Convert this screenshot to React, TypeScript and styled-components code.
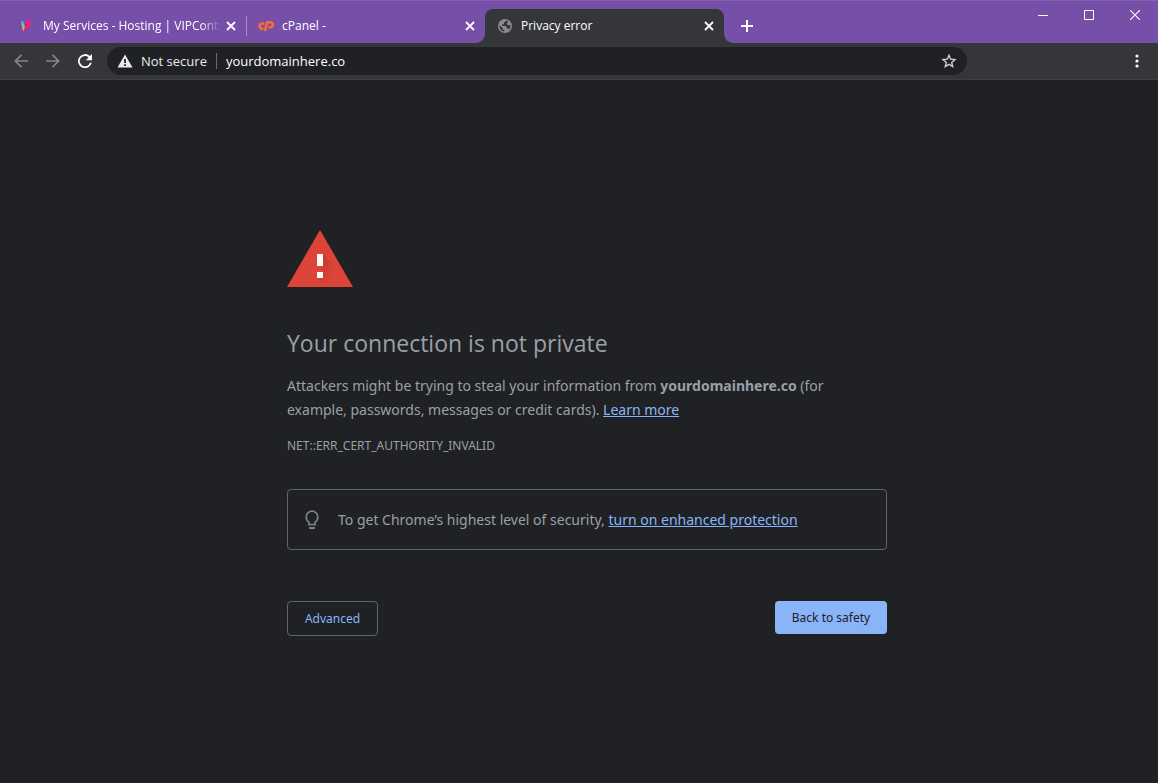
import React from 'react';
import styled, { createGlobalStyle } from 'styled-components';

const GlobalStyle = createGlobalStyle`
  *, *::before, *::after { box-sizing: border-box; }
  html, body { margin: 0; background: #202124; }
  body { font-family: 'Open Sans', 'Noto Sans', sans-serif; color: #9aa0a6; }
  button, input { font: inherit; }
  button { padding: 0; border: 0; background: none; color: inherit; }
  svg { display: block; flex: none; }
`;

const Window = styled.div`
  display: flex;
  flex-direction: column;
  min-height: 100vh;
`;

const TitleBar = styled.header`
  display: flex;
  align-items: flex-end;
  height: 43px;
  padding-left: 7px;
  background: #754fa8;
  border-top: 1px solid #8660b3;
`;

const TabStrip = styled.nav`
  display: flex;
  flex: 0 1 717px;
  min-width: 0;
`;

const Tab = styled.div<{ $active?: boolean }>`
  position: relative;
  display: flex;
  align-items: center;
  flex: 1 1 0;
  min-width: 0;
  height: 34px;
  padding: 0 9px 0 12px;
  color: #fff;
  font-size: 12px;
  line-height: 16px;
  background: ${p => (p.$active ? '#35363a' : 'transparent')};
  border-radius: 8px 8px 0 0;

  &::before, &::after {
    content: '';
    display: ${p => (p.$active ? 'block' : 'none')};
    position: absolute;
    bottom: 0;
    width: 8px;
    height: 8px;
  }
  &::before {
    right: 100%;
    background: radial-gradient(circle at 0 0, transparent 7px, #35363a 8px);
  }
  &::after {
    left: 100%;
    background: radial-gradient(circle at 100% 0, transparent 7px, #35363a 8px);
  }
`;

const TabDivider = styled.span`
  position: absolute;
  left: 100%;
  top: 7px;
  width: 1px;
  height: 20px;
  background: #a88fc8;
`;

const TabTitle = styled.a`
  flex: 1;
  min-width: 0;
  margin: 0 4px 0 8px;
  overflow: hidden;
  white-space: nowrap;
  color: inherit;
  text-decoration: none;
`;

const FadingTitle = styled(TabTitle)`
  mask-image: linear-gradient(to right, #000 calc(100% - 20px), transparent);
`;

const IconButton = styled.button`
  display: grid;
  place-items: center;
  flex: none;
  width: 12px;
  height: 16px;
  color: #fff;
`;

const NewTab = styled(IconButton)`
  width: 28px;
  height: 34px;
  margin-left: 9px;
`;

const WindowControls = styled.div`
  display: flex;
  align-self: flex-start;
  margin-left: auto;
`;

const WindowButton = styled(IconButton)`
  width: 46px;
  height: 28px;
`;

const Toolbar = styled.div`
  display: flex;
  align-items: center;
  height: 37px;
  background: #35363a;
  border-bottom: 1px solid #3f4045;
  padding-left: 5px;
`;

const NavButton = styled(IconButton)<{ $dim?: boolean }>`
  width: 32px;
  height: 32px;
  color: ${p => (p.$dim ? '#85868a' : '#fff')};
`;

const BookmarkButton = styled(IconButton)`
  width: 16px;
`;

const Omnibox = styled.form`
  display: flex;
  align-items: center;
  flex: 1;
  min-width: 0;
  height: 28px;
  margin-left: 6px;
  padding: 0 10px;
  border-radius: 14px;
  background: #202124;
  color: #fff;
  font-size: 13px;
  line-height: 20px;
`;

const Security = styled.button`
  display: flex;
  align-items: center;
  gap: 8px;
  flex: none;
  padding-right: 9px;
  border-right: 1px solid #6a6b6f;
  line-height: 16px;
  color: #e8eaed;
`;

const Address = styled.input`
  flex: 1;
  min-width: 0;
  padding: 0;
  margin-left: 9px;
  border: 0;
  outline: 0;
  background: none;
  color: #fff;
`;

const Extensions = styled.div`
  display: flex;
  justify-content: flex-end;
  flex: none;
  width: 191px;
  padding-right: 5px;
`;

const Page = styled.main`
  display: flex;
  flex-direction: column;
  width: 100%;
  max-width: 616px;
  margin: 0 auto;
  padding: 150px 0 40px 16px;
  font-family: 'Noto Sans', 'Open Sans', sans-serif;
`;

const Heading = styled.h1`
  margin: 40px 0 0;
  font-family: 'Open Sans', sans-serif;
  font-size: 23px;
  line-height: 32px;
  font-weight: 400;
`;

const Paragraph = styled.p`
  max-width: 560px;
  margin: 15px 0 0;
  font-size: 14px;
  line-height: 24px;
`;

const ErrorCode = styled.p`
  margin: 16px 0 0;
  font-size: 12px;
  line-height: 16px;
`;

const Link = styled.a`
  color: #8ab4f8;
  text-decoration: underline;
`;

const Notice = styled.section`
  display: flex;
  align-items: center;
  gap: 14px;
  min-height: 61px;
  margin-top: 35px;
  padding: 0 12px;
  border: 1px solid #5f6368;
  border-radius: 4px;
  font-size: 14px;
  line-height: 24px;
`;

const Actions = styled.div`
  display: flex;
  justify-content: space-between;
  align-items: flex-start;
  margin-top: 51px;
`;

const ActionButton = styled.button<{ $primary?: boolean }>`
  min-width: ${p => (p.$primary ? '112px' : '91px')};
  height: ${p => (p.$primary ? '33px' : '35px')};
  padding: 0 15px;
  border: ${p => (p.$primary ? '0' : '1px solid #5f6368')};
  border-radius: 4px;
  background: ${p => (p.$primary ? '#8ab4f8' : 'transparent')};
  color: ${p => (p.$primary ? '#202124' : '#8ab4f8')};
  font-size: 12px;
`;

const CloseIcon = () => (
  <svg width="10" height="10" viewBox="0 0 10 10" stroke="currentColor" strokeWidth="1.8">
    <path d="M1 1l8 8M9 1L1 9" />
  </svg>
);

const VipIcon = () => (
  <svg width="16" height="16" viewBox="0 0 16 16">
    <path d="M2 2.500Q5 3 6 6L4.500 9Q2 7 2 2.500z" fill="#38b6e8" />
    <path d="M2.800 5.500q3 1 3.200 4l-1.500 4q-2-3-1.700-8z" fill="#d9a75a" />
    <path d="M7 2.200q4.500-1.700 5.500 1Q12.500 8.500 5.500 13.500 8 8 7 2.200z" fill="#e5257d" />
    <path d="M5.500 4.500l3 1.500-3 7.500q1-4 0-9z" fill="#a92d8d" />
  </svg>
);

const CpanelIcon = () => (
  <svg width="16" height="16" viewBox="0 0 16 16" fill="none" stroke="#ff6c2c" strokeWidth="2.4">
    <path d="M6.600 5.600H4.200a2.600 2.600 0 0 0 0 5.200H5.400" />
    <path d="M6.800 13.200L9.400 4.200H12.200a2.600 2.600 0 0 1 0 5.200H10.200" />
  </svg>
);

const GlobeIcon = () => (
  <svg width="16" height="16" viewBox="0 0 16 16">
    <circle cx="8" cy="8" r="7" fill="#8b8c8e" />
    <path d="M9.5 2.400L7 4.700v1.600H5.200v1.600h3.300l1.300 1.400v1.300h1.500l.9 1A5.600 5.600 0 0 0 13.400 7l-2.500.2-1.200-1.600 1.700-2.200zM2.500 7.300l3.200 3v1.300l1.500.7v1.300A5.700 5.700 0 0 1 2.500 7.300z" fill="#35363a" />
  </svg>
);

const DangerIcon = () => (
  <svg width="66" height="57" viewBox="0 0 66 57" role="img" aria-label="Warning">
    <defs>
      <linearGradient id="markShadow" x1="0" y1="0" x2="1" y2="1">
        <stop offset="0.200" stopColor="#b3321f" stopOpacity="0.550" />
        <stop offset="0.700" stopColor="#b3321f" stopOpacity="0" />
      </linearGradient>
    </defs>
    <path d="M33 0L66 57H0z" fill="#db4437" />
    <path d="M36 24L49 37v20H38L30 48l6-2z" fill="url(#markShadow)" />
    <path d="M30 24h6v12h-6zM30 42h6v6h-6z" fill="#fff" />
  </svg>
);

export default function App() {
  return (
    <Window>
      <GlobalStyle />
      <TitleBar>
        <TabStrip aria-label="Tabs">
          <Tab>
            <VipIcon />
            <FadingTitle href="#services">My Services - Hosting | VIPControl</FadingTitle>
            <IconButton aria-label="Close My Services"><CloseIcon /></IconButton>
            <TabDivider />
          </Tab>
          <Tab>
            <CpanelIcon />
            <TabTitle href="#cpanel">cPanel -</TabTitle>
            <IconButton aria-label="Close cPanel"><CloseIcon /></IconButton>
          </Tab>
          <Tab $active>
            <GlobeIcon />
            <TabTitle href="#privacy" aria-current="page">Privacy error</TabTitle>
            <IconButton aria-label="Close Privacy error"><CloseIcon /></IconButton>
          </Tab>
        </TabStrip>
        <NewTab aria-label="New tab">
          <svg width="12" height="12" viewBox="0 0 12 12" stroke="currentColor" strokeWidth="2"><path d="M6 0v12M0 6h12" /></svg>
        </NewTab>
        <WindowControls>
          <WindowButton aria-label="Minimize">
            <svg width="10" height="10" viewBox="0 0 10 10" stroke="currentColor"><path d="M0 5.500h10" /></svg>
          </WindowButton>
          <WindowButton aria-label="Maximize">
            <svg width="10" height="10" viewBox="0 0 10 10" stroke="currentColor" fill="none"><path d="M.5.5h9v9h-9z" /></svg>
          </WindowButton>
          <WindowButton aria-label="Close window">
            <svg width="10" height="10" viewBox="0 0 10 10" stroke="currentColor" strokeWidth="1.1"><path d="M0 0l10 10M10 0L0 10" /></svg>
          </WindowButton>
        </WindowControls>
      </TitleBar>
      <Toolbar>
        <NavButton $dim aria-label="Back">
          <svg width="14" height="14" viewBox="0 0 14 14" fill="none" stroke="currentColor" strokeWidth="1.7"><path d="M14 7H1.500M7.500 .8L1.300 7l6.200 6.200" /></svg>
        </NavButton>
        <NavButton $dim aria-label="Forward">
          <svg width="14" height="14" viewBox="0 0 14 14" fill="none" stroke="currentColor" strokeWidth="1.7"><path d="M0 7h12.500M6.500 .8L12.700 7l-6.200 6.200" /></svg>
        </NavButton>
        <NavButton aria-label="Reload">
          <svg width="14" height="14" viewBox="0 0 14 14"><path d="M11.900 2.100A7 7 0 1 0 13.800 8.800H11.900A5.200 5.200 0 1 1 10.600 3.400L7.800 6.200H14V0z" fill="currentColor" /></svg>
        </NavButton>
        <Omnibox onSubmit={e => e.preventDefault()}>
          <Security type="button">
            <svg width="16" height="14" viewBox="0 0 16 14"><path d="M8 .5L15.500 13.500H.5z" fill="currentColor" /><path d="M7.100 5h1.800v4H7.100zM7.100 10.200h1.800V12H7.100z" fill="#202124" /></svg>
            Not secure
          </Security>
          <Address aria-label="Address" defaultValue="yourdomainhere.co" />
          <BookmarkButton type="button" aria-label="Bookmark this page">
            <svg width="16" height="16" viewBox="0 0 16 16" fill="none" stroke="#d0d1d3" strokeWidth="1.4"><path d="M8 2.200l1.700 4 4.300.4-3.300 2.800 1 4.200L8 11.300l-3.700 2.300 1-4.200L2 6.600l4.300-.4z" /></svg>
          </BookmarkButton>
        </Omnibox>
        <Extensions>
          <NavButton aria-label="Menu">
            <svg width="4" height="14" viewBox="0 0 4 14" fill="currentColor"><circle cx="2" cy="2" r="1.6" /><circle cx="2" cy="7" r="1.6" /><circle cx="2" cy="12" r="1.6" /></svg>
          </NavButton>
        </Extensions>
      </Toolbar>
      <Page>
        <DangerIcon />
        <Heading>Your connection is not private</Heading>
        <Paragraph>
          Attackers might be trying to steal your information from <strong>yourdomainhere.co</strong> (for example, passwords, messages or credit cards). <Link href="#learn-more">Learn more</Link>
        </Paragraph>
        <ErrorCode>NET::ERR_CERT_AUTHORITY_INVALID</ErrorCode>
        <Notice>
          <svg width="24" height="24" viewBox="0 0 24 24" fill="none" stroke="#7b7e83" strokeWidth="1.8"><path d="M9 16.600v-2.400C7.400 13.200 6.200 11.400 6.200 9a5.800 5.800 0 0 1 11.600 0c0 2.400-1.200 4.200-2.800 5.200v2.400zM9 20h6" /></svg>
          <span>To get Chrome’s highest level of security, <Link href="#protection">turn on enhanced protection</Link></span>
        </Notice>
        <Actions>
          <ActionButton>Advanced</ActionButton>
          <ActionButton $primary>Back to safety</ActionButton>
        </Actions>
      </Page>
    </Window>
  );
}
